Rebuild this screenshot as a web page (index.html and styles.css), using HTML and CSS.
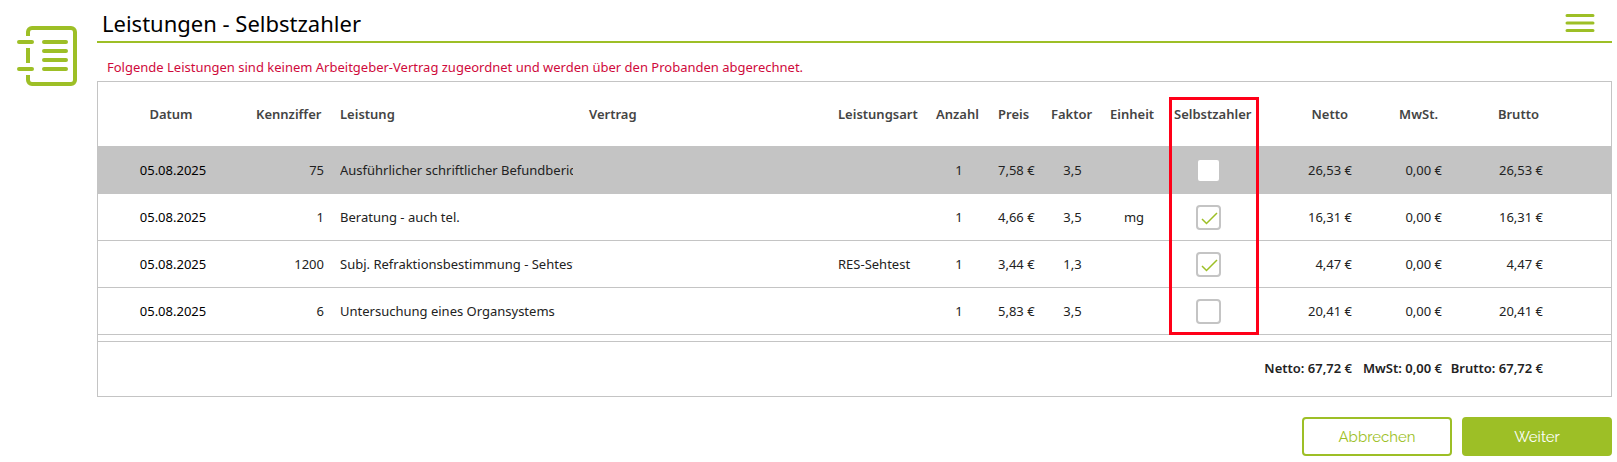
FILE: index.html
```html
<!DOCTYPE html>
<html lang="de">
  <head>
    <meta charset="utf-8">
    <title>Leistungen - Selbstzahler</title>
    <link rel="stylesheet" href="styles.css">
  </head>
  <body>
    <div class="page">
      <aside class="side">
        <svg class="side-icon" width="62" height="62" viewBox="0 0 62 62" fill="none" stroke="#9dbf26" stroke-width="4">
          <path d="M12 11V7a4 4 0 0 1 4-4H55a4 4 0 0 1 4 4V55a4 4 0 0 1-4 4H16a4 4 0 0 1-4-4V50M12 23V38" />
          <path stroke-linecap="round" d="M3 17H16M3 44H16M28 17H50M28 26H50M28 35H50M28 44H50" />
        </svg>
      </aside>

      <main class="content">
        <header class="header">
          <h1>Leistungen - Selbstzahler</h1>
          <button type="button" class="menu-btn" aria-label="Menü">
            <svg width="30" height="20" viewBox="0 0 30 20" fill="none" stroke="#9dbf26" stroke-width="3" stroke-linecap="round">
              <path d="M2 2.500H28M2 10H28M2 17.500H28" />
            </svg>
          </button>
        </header>

        <p class="notice">Folgende Leistungen sind keinem Arbeitgeber-Vertrag zugeordnet und werden über den Probanden abgerechnet.</p>

        <table class="services">
          <colgroup>
            <col class="col-date">
            <col class="col-code">
            <col class="col-text">
            <col class="col-text">
            <col class="col-type">
            <col class="col-count">
            <col class="col-price">
            <col class="col-factor">
            <col class="col-unit">
            <col class="col-self">
            <col class="col-net">
            <col class="col-tax">
            <col class="col-gross">
            <col>
          </colgroup>
          <thead>
            <tr>
              <th class="center">Datum</th>
              <th class="right">Kennziffer</th>
              <th>Leistung</th>
              <th>Vertrag</th>
              <th>Leistungsart</th>
              <th>Anzahl</th>
              <th>Preis</th>
              <th>Faktor</th>
              <th>Einheit</th>
              <th class="self-head">Selbstzahler<span class="marker"></span></th>
              <th class="right">Netto</th>
              <th class="right">MwSt.</th>
              <th class="right">Brutto</th>
              <th></th>
            </tr>
          </thead>
          <tbody>
            <tr class="selected">
              <td class="center date">05.08.2025</td>
              <td class="right">75</td>
              <td><div class="clip">Ausführlicher schriftlicher Befundbericht</div></td>
              <td></td>
              <td></td>
              <td class="center">1</td>
              <td>7,58 €</td>
              <td class="center">3,5</td>
              <td class="center"></td>
              <td class="center"><input type="checkbox" aria-label="Selbstzahler Ziffer 75"></td>
              <td class="right">26,53 €</td>
              <td class="right">0,00 €</td>
              <td class="right">26,53 €</td>
              <td></td>
            </tr>
            <tr>
              <td class="center date">05.08.2025</td>
              <td class="right">1</td>
              <td><div class="clip">Beratung - auch tel.</div></td>
              <td></td>
              <td></td>
              <td class="center">1</td>
              <td>4,66 €</td>
              <td class="center">3,5</td>
              <td class="center">mg</td>
              <td class="center"><input type="checkbox" aria-label="Selbstzahler Ziffer 1" checked></td>
              <td class="right">16,31 €</td>
              <td class="right">0,00 €</td>
              <td class="right">16,31 €</td>
              <td></td>
            </tr>
            <tr>
              <td class="center date">05.08.2025</td>
              <td class="right">1200</td>
              <td><div class="clip">Subj. Refraktionsbestimmung - Sehtest</div></td>
              <td></td>
              <td>RES-Sehtest</td>
              <td class="center">1</td>
              <td>3,44 €</td>
              <td class="center">1,3</td>
              <td class="center"></td>
              <td class="center"><input type="checkbox" aria-label="Selbstzahler Ziffer 1200" checked></td>
              <td class="right">4,47 €</td>
              <td class="right">0,00 €</td>
              <td class="right">4,47 €</td>
              <td></td>
            </tr>
            <tr>
              <td class="center date">05.08.2025</td>
              <td class="right">6</td>
              <td><div class="clip">Untersuchung eines Organsystems</div></td>
              <td></td>
              <td></td>
              <td class="center">1</td>
              <td>5,83 €</td>
              <td class="center">3,5</td>
              <td class="center"></td>
              <td class="center"><input type="checkbox" aria-label="Selbstzahler Ziffer 6"></td>
              <td class="right">20,41 €</td>
              <td class="right">0,00 €</td>
              <td class="right">20,41 €</td>
              <td></td>
            </tr>
          </tbody>
          <tfoot>
            <tr class="spacer">
              <td colspan="14"></td>
            </tr>
            <tr class="totals">
              <td colspan="11">Netto: 67,72 €</td>
              <td>MwSt: 0,00 €</td>
              <td>Brutto: 67,72 €</td>
              <td></td>
            </tr>
          </tfoot>
        </table>

        <div class="actions">
          <button type="button" class="btn btn-outline">Abbrechen</button>
          <button type="button" class="btn">Weiter</button>
        </div>
      </main>
    </div>
  </body>
</html>
```
FILE: styles.css
```css
:root {
  --green: #9dbf26;
  --line: #c4c4c4;
  --red: #cf0a3c;
  --text: #222;
}

* {
  box-sizing: border-box;
  margin: 0;
  padding: 0;
}

body {
  background: white;
  color: var(--text);
  font-family: "Segoe UI", "Noto Sans", sans-serif;
  font-size: 13px;
  line-height: 18px;
}

.page {
  display: flex;
}

.side {
  flex: 0 0 97px;
  padding: 25px 0 0 16px;
}

.side-icon {
  display: block;
}

.content {
  flex: 1;
  min-width: 0;
  padding-right: 5px;
}

.header {
  display: flex;
  justify-content: space-between;
  align-items: center;
  height: 43px;
  padding: 5px 17px 0 5px;
  border-bottom: 2px solid var(--green);
}

h1 {
  color: black;
  font-size: 22px;
  font-weight: normal;
  line-height: 30px;
}

.menu-btn {
  display: flex;
  background: none;
  border: none;
  cursor: pointer;
}

.notice {
  padding: 15px 10px 5px;
  color: var(--red);
}

.services {
  width: 100%;
  table-layout: fixed;
  border: 1px solid var(--line);
  border-spacing: 0;
}

.col-date { width: 150px; }
.col-code { width: 84px; }
.col-text { width: 249px; }
.col-type { width: 98px; }
.col-count { width: 62px; }
.col-price { width: 53px; }
.col-factor { width: 59px; }
.col-unit { width: 64px; }
.col-self { width: 85px; }
.col-net { width: 109px; }
.col-tax { width: 90px; }
.col-gross { width: 101px; }

th,
td {
  padding: 0 8px;
  border-bottom: 1px solid var(--line);
  text-align: left;
  white-space: nowrap;
}

th {
  height: 65px;
  color: #444;
  font-weight: 600;
}

td {
  height: 47px;
}

.clip {
  overflow: hidden;
}

.center {
  text-align: center;
}

.right {
  text-align: right;
}

th.center,
th.right {
  padding-right: 12px;
}

.date {
  color: black;
}

.selected td {
  background: var(--line);
}

.self-head {
  position: relative;
}

.marker {
  position: absolute;
  top: 15px;
  left: 3px;
  right: -8px;
  height: 238px;
  border: 3px solid #ff0018;
  pointer-events: none;
}

input[type="checkbox"] {
  display: inline-block;
  width: 25px;
  height: 25px;
  appearance: none;
  border: 2px solid var(--line);
  border-radius: 4px;
  background: white;
  vertical-align: middle;
}

input[type="checkbox"]:checked {
  background: white url("data:image/svg+xml,%3Csvg xmlns='http://www.w3.org/2000/svg' width='21' height='21' fill='none' stroke='%239dbf26' stroke-width='1.500'%3E%3Cpath d='M4 12L8.500 16.500L19 6'/%3E%3C/svg%3E") center no-repeat;
}

.spacer td {
  height: 7px;
}

.totals td {
  height: 54px;
  padding: 0 8px 3px 0;
  border: none;
  text-align: right;
  font-weight: 600;
}

.actions {
  display: flex;
  justify-content: flex-end;
  gap: 10px;
  margin-top: 20px;
}

.btn {
  width: 150px;
  height: 39px;
  border: 2px solid var(--green);
  border-radius: 4px;
  background: var(--green);
  color: white;
  font-family: Raleway, Lato, sans-serif;
  font-size: 15px;
  cursor: pointer;
}

.btn-outline {
  background: white;
  color: var(--green);
}
```
